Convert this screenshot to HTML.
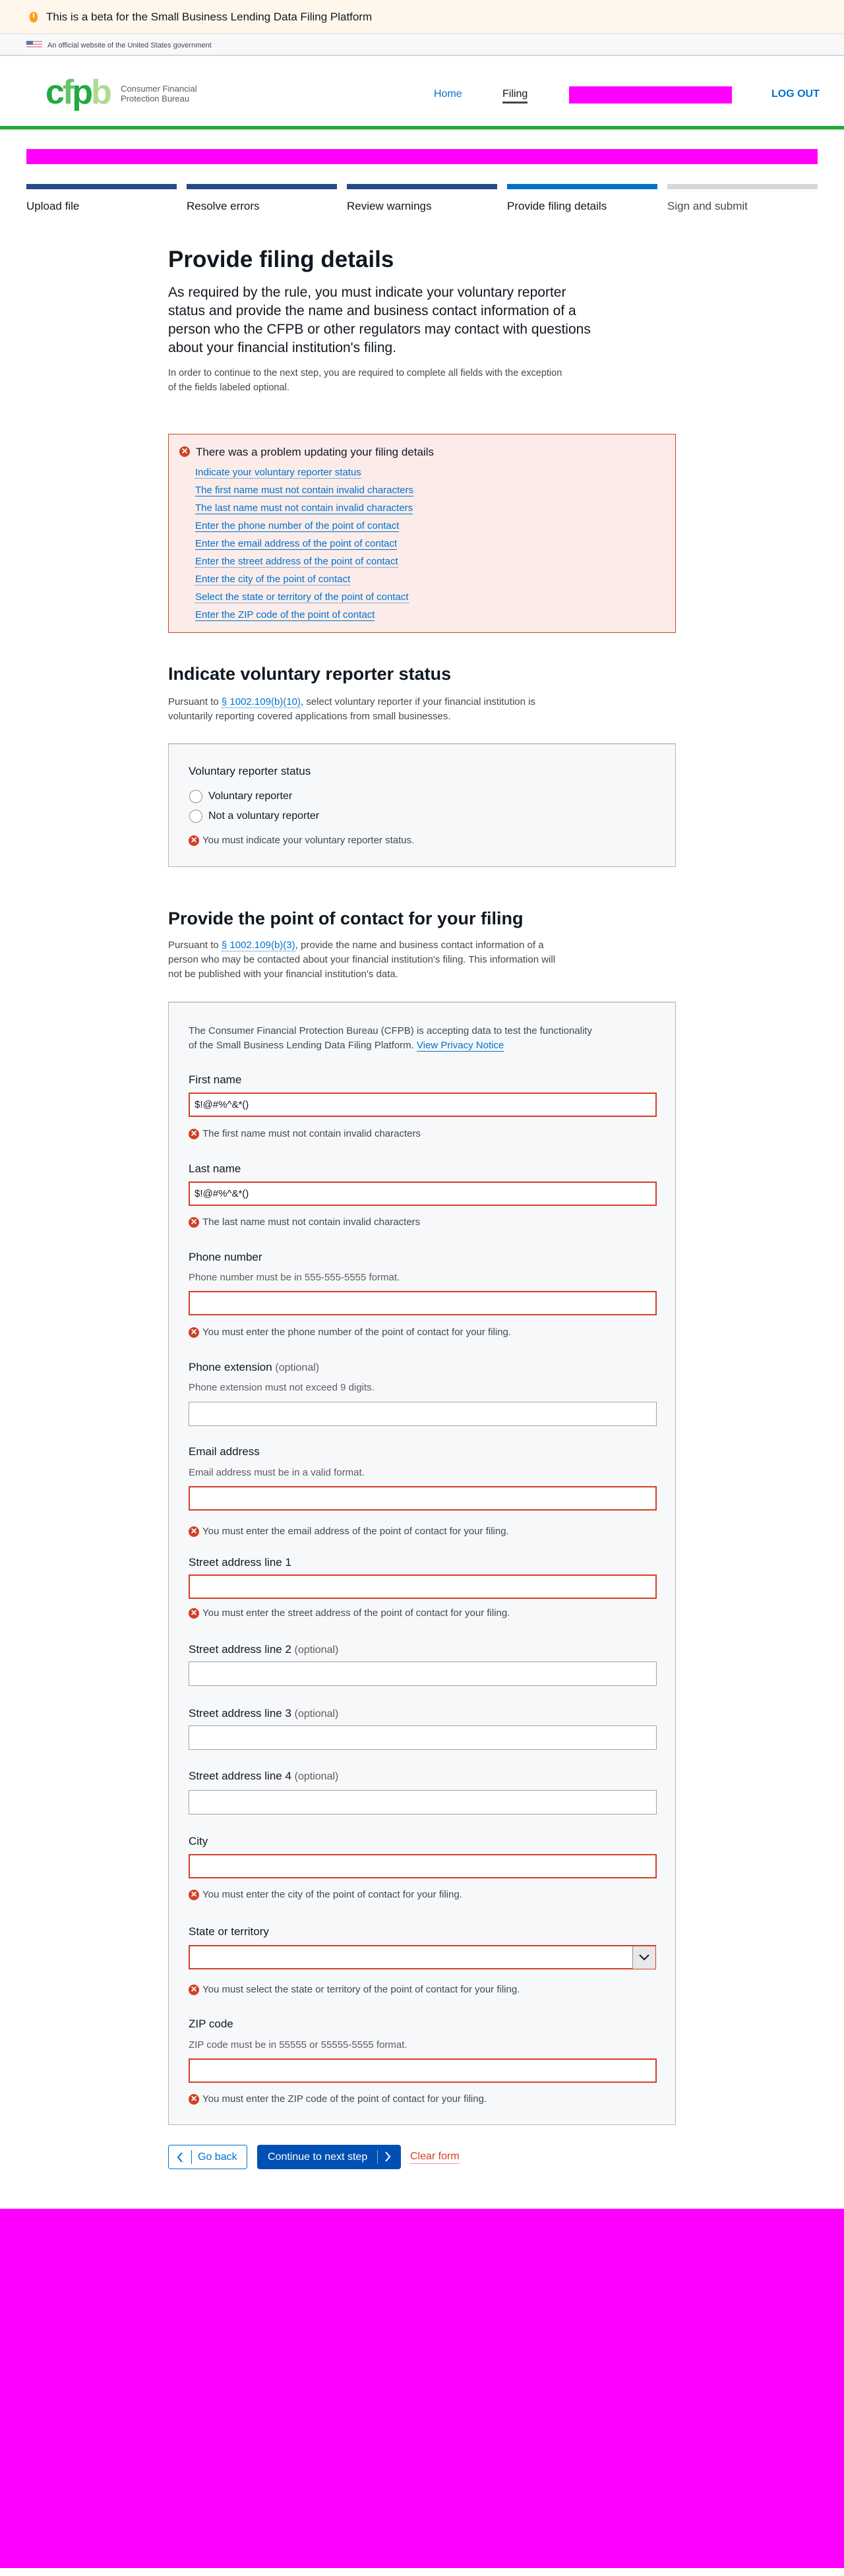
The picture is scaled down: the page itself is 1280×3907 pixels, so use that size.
<!DOCTYPE html>
<html><head><meta charset="utf-8">
<style>
*{box-sizing:border-box;margin:0;padding:0}
body{width:1280px;height:3907px;position:relative;font-family:"Liberation Sans",sans-serif;color:#101820;background:#fff;overflow:hidden}
.a{position:absolute;white-space:nowrap}
a{color:#0072ce;text-decoration:none;border-bottom:1px dotted #0072ce}
.lnk{border-bottom:1px solid #0072ce}
.err{position:absolute;font-size:15px;color:#43484e;line-height:20px;padding-left:21px}
.err:before{content:"";position:absolute;left:0;top:2px;width:16px;height:16px;border-radius:50%;background:#d14124}
.err:after{content:"\00d7";position:absolute;left:0;top:0;width:16px;line-height:19px;text-align:center;color:#fff;font-size:16px;font-weight:bold}
.lbl{position:absolute;left:30px;font-size:17px;line-height:22px;color:#101820}
.lbl span{color:#5a5d61;font-size:16px}
.help{position:absolute;left:30px;font-size:15px;line-height:20px;color:#5a5d61}
.inp{position:absolute;left:30px;width:710px;height:37px;background:#fff;border:1px solid #a2a3a4;font-size:15px;line-height:35px;padding-left:8px}
.inp.e{border:2px solid #d14124;line-height:33px;padding-left:7px}
.eb{position:absolute;left:30px}
</style></head><body>
<div class="a" style="left:0;top:0;width:1280px;height:52px;background:#fff6ec;border-bottom:1px solid #d6d7d9"></div>
<div class="a" style="left:45px;top:18px;width:12px;height:16px;border-radius:6px;background:#ff9e1b"></div>
<div class="a" style="left:50px;top:20px;width:2px;height:7px;background:#fff"></div>
<div class="a" style="left:70px;top:15px;font-size:17px;line-height:22px">This is a beta for the Small Business Lending Data Filing Platform</div>
<div class="a" style="left:0;top:53px;width:1280px;height:32px;background:#f7f8f9;border-bottom:2px solid #d6d7d9"></div>
<div class="a" style="left:40px;top:62px;width:24px;height:12px;background:repeating-linear-gradient(#e8a0a8 0 2px,#fff 2px 4px)"></div>
<div class="a" style="left:40px;top:62px;width:10px;height:6px;background:#5a74b0"></div>
<div class="a" style="left:72px;top:62px;font-size:11px;line-height:14px;color:#43484e">An official website of the United States government</div>
<div class="a" style="left:69px;top:112px;font-size:52px;font-weight:bold;letter-spacing:-3px;line-height:56px;color:#20aa3f">c<span style="color:#66c368">f</span>p<span style="color:#addc91">b</span></div>
<div class="a" style="left:183px;top:127px;font-size:13px;line-height:15px;color:#5a5d61">Consumer Financial<br>Protection Bureau</div>
<div class="a" style="left:658px;top:133px;font-size:16px;line-height:20px;color:#0072ce">Home</div>
<div class="a" style="left:762px;top:133px;font-size:16px;line-height:20px;color:#101820;border-bottom:3px solid #43484e;padding-bottom:1px">Filing</div>
<div class="a" style="left:863px;top:131px;width:247px;height:26px;background:#ff00ff"></div>
<div class="a" style="left:1170px;top:133px;font-size:16px;line-height:20px;color:#0072ce;font-weight:bold">LOG OUT</div>
<div class="a" style="left:0;top:191px;width:1280px;height:6px;background:#20aa3f;border-bottom:1px solid #addc91"></div>
<div class="a" style="left:40px;top:226px;width:1200px;height:23px;background:#ff00ff"></div>
<div class="a" style="left:40px;top:279px;width:228px;height:8px;background:#254b87"></div>
<div class="a" style="left:283px;top:279px;width:228px;height:8px;background:#254b87"></div>
<div class="a" style="left:526px;top:279px;width:228px;height:8px;background:#254b87"></div>
<div class="a" style="left:769px;top:279px;width:228px;height:8px;background:#0072ce"></div>
<div class="a" style="left:1012px;top:279px;width:228px;height:8px;background:#d6d7d9"></div>
<div class="a" style="left:40px;top:302px;font-size:17px;line-height:22px">Upload file</div>
<div class="a" style="left:283px;top:302px;font-size:17px;line-height:22px">Resolve errors</div>
<div class="a" style="left:526px;top:302px;font-size:17px;line-height:22px">Review warnings</div>
<div class="a" style="left:769px;top:302px;font-size:17px;line-height:22px">Provide filing details</div>
<div class="a" style="left:1012px;top:302px;font-size:17px;line-height:22px;color:#43484e">Sign and submit</div>
<div class="a" style="left:255px;top:372px;font-size:35px;font-weight:bold;line-height:44px">Provide filing details</div>
<div class="a" style="left:255px;top:430px;font-size:21px;line-height:28px;white-space:normal;width:665px">As required by the rule, you must indicate your voluntary reporter status and provide the name and business contact information of a person who the CFPB or other regulators may contact with questions about your financial institution's filing.</div>
<div class="a" style="left:255px;top:555px;font-size:14.5px;line-height:22px;color:#43484e;white-space:normal;width:610px">In order to continue to the next step, you are required to complete all fields with the exception of the fields labeled optional.</div>
<div class="a" style="left:255px;top:658px;width:770px;height:302px;background:#fbecea;border:1px solid #d14124"></div>
<div class="err" style="left:272px;top:675px;font-size:17px;line-height:22px;color:#101820;padding-left:25px">There was a problem updating your filing details</div>
<div class="a" style="left:296px;top:703px;font-size:15px;line-height:27px">
<a>Indicate your voluntary reporter status</a><br>
<a class="lnk">The first name must not contain invalid characters</a><br>
<a class="lnk">The last name must not contain invalid characters</a><br>
<a class="lnk">Enter the phone number of the point of contact</a><br>
<a class="lnk">Enter the email address of the point of contact</a><br>
<a>Enter the street address of the point of contact</a><br>
<a>Enter the city of the point of contact</a><br>
<a>Select the state or territory of the point of contact</a><br>
<a class="lnk">Enter the ZIP code of the point of contact</a></div>
<div class="a" style="left:255px;top:1006px;font-size:27px;font-weight:bold;line-height:32px">Indicate voluntary reporter status</div>
<div class="a" style="left:255px;top:1054px;font-size:15px;line-height:22px;color:#43484e">Pursuant to <a>§ 1002.109(b)(10)</a>, select voluntary reporter if your financial institution is<br>voluntarily reporting covered applications from small businesses.</div>
<div class="a" style="left:255px;top:1127px;width:770px;height:188px;background:#f7f8f9;border:1px solid #b4b5b6;border-top:2px solid #c8c9ca"></div>
<div class="a" style="left:286px;top:1159px;font-size:17px;line-height:22px">Voluntary reporter status</div>
<div class="a" style="left:287px;top:1198px;width:20px;height:20px;border:1px solid #919395;border-radius:50%;background:#fff"></div>
<div class="a" style="left:316px;top:1197px;font-size:16px;line-height:22px">Voluntary reporter</div>
<div class="a" style="left:287px;top:1228px;width:20px;height:20px;border:1px solid #919395;border-radius:50%;background:#fff"></div>
<div class="a" style="left:316px;top:1227px;font-size:16px;line-height:22px">Not a voluntary reporter</div>
<div class="err" style="left:286px;top:1265px">You must indicate your voluntary reporter status.</div>
<div class="a" style="left:255px;top:1377px;font-size:27px;font-weight:bold;line-height:32px">Provide the point of contact for your filing</div>
<div class="a" style="left:255px;top:1423px;font-size:15px;line-height:22px;color:#43484e">Pursuant to <a>§ 1002.109(b)(3)</a>, provide the name and business contact information of a<br>person who may be contacted about your financial institution's filing. This information will<br>not be published with your financial institution's data.</div>
<div class="a" style="left:255px;top:1519px;width:770px;height:1704px;background:#f7f8f9;border:1px solid #b4b5b6;border-top:2px solid #c8c9ca">
<div class="a" style="left:30px;top:32px;font-size:15px;line-height:22px;color:#43484e">The Consumer Financial Protection Bureau (CFPB) is accepting data to test the functionality<br>of the Small Business Lending Data Filing Platform. <a class="lnk">View Privacy Notice</a></div>
<div class="lbl" style="top:106px">First name</div>
<div class="inp e" style="top:136px">$!@#%^&amp;*()</div>
<div class="err eb" style="top:189px">The first name must not contain invalid characters</div>
<div class="lbl" style="top:241px">Last name</div>
<div class="inp e" style="top:271px">$!@#%^&amp;*()</div>
<div class="err eb" style="top:323px">The last name must not contain invalid characters</div>
<div class="lbl" style="top:375px">Phone number</div>
<div class="help" style="top:407px">Phone number must be in 555-555-5555 format.</div>
<div class="inp e" style="top:437px"></div>
<div class="err eb" style="top:490px">You must enter the phone number of the point of contact for your filing.</div>
<div class="lbl" style="top:542px">Phone extension <span>(optional)</span></div>
<div class="help" style="top:574px">Phone extension must not exceed 9 digits.</div>
<div class="inp" style="top:605px"></div>
<div class="lbl" style="top:670px">Email address</div>
<div class="help" style="top:703px">Email address must be in a valid format.</div>
<div class="inp e" style="top:733px"></div>
<div class="err eb" style="top:792px">You must enter the email address of the point of contact for your filing.</div>
<div class="lbl" style="top:838px">Street address line 1</div>
<div class="inp e" style="top:867px"></div>
<div class="err eb" style="top:916px">You must enter the street address of the point of contact for your filing.</div>
<div class="lbl" style="top:970px">Street address line 2 <span>(optional)</span></div>
<div class="inp" style="top:999px"></div>
<div class="lbl" style="top:1067px">Street address line 3 <span>(optional)</span></div>
<div class="inp" style="top:1096px"></div>
<div class="lbl" style="top:1162px">Street address line 4 <span>(optional)</span></div>
<div class="inp" style="top:1194px"></div>
<div class="lbl" style="top:1261px">City</div>
<div class="inp e" style="top:1291px"></div>
<div class="err eb" style="top:1343px">You must enter the city of the point of contact for your filing.</div>
<div class="lbl" style="top:1398px">State or territory</div>
<div class="inp e" style="top:1429px;width:709px"></div>
<div class="a" style="left:703px;top:1431px;width:35px;height:34px;background:#e7e8e9;border-left:1px solid #919395;font-size:18px;text-align:center;line-height:32px">
<svg width="16" height="10" viewBox="0 0 16 10" style="margin-top:12px;display:block;margin-left:9px"><path d="M1 1 L8 8 L15 1" fill="none" stroke="#101820" stroke-width="2"/></svg></div>
<div class="err eb" style="top:1487px">You must select the state or territory of the point of contact for your filing.</div>
<div class="lbl" style="top:1538px">ZIP code</div>
<div class="help" style="top:1571px">ZIP code must be in 55555 or 55555-5555 format.</div>
<div class="inp e" style="top:1601px"></div>
<div class="err eb" style="top:1653px">You must enter the ZIP code of the point of contact for your filing.</div>
</div>
<div class="a" style="left:255px;top:3253px;width:120px;height:37px;border:1px solid #0072ce;border-radius:4px;background:#fff;color:#0072ce;font-size:16px;line-height:35px">
<svg class="a" style="left:12px;top:10px" width="10" height="16" viewBox="0 0 10 16"><path d="M8 1 L2 8 L8 15" fill="none" stroke="#0072ce" stroke-width="2"/></svg>
<span class="a" style="left:34px;top:7px;height:21px;border-left:1px solid #0072ce"></span>
<span class="a" style="left:44px;top:0">Go back</span></div>
<div class="a" style="left:390px;top:3253px;width:218px;height:37px;border-radius:4px;background:#0050b4;color:#fff;font-size:16px;line-height:37px">
<span class="a" style="left:16px;top:0">Continue to next step</span>
<span class="a" style="left:182px;top:8px;height:21px;border-left:1px solid #9ab"></span>
<svg class="a" style="left:193px;top:10px" width="10" height="16" viewBox="0 0 10 16"><path d="M2 1 L8 8 L2 15" fill="none" stroke="#fff" stroke-width="2"/></svg></div>
<div class="a" style="left:622px;top:3261px;font-size:16px;line-height:20px;color:#d14124;border-bottom:1px dotted #d14124">Clear form</div>
<div class="a" style="left:0;top:3350px;width:1280px;height:545px;background:#ff00ff"></div>
</body></html>
